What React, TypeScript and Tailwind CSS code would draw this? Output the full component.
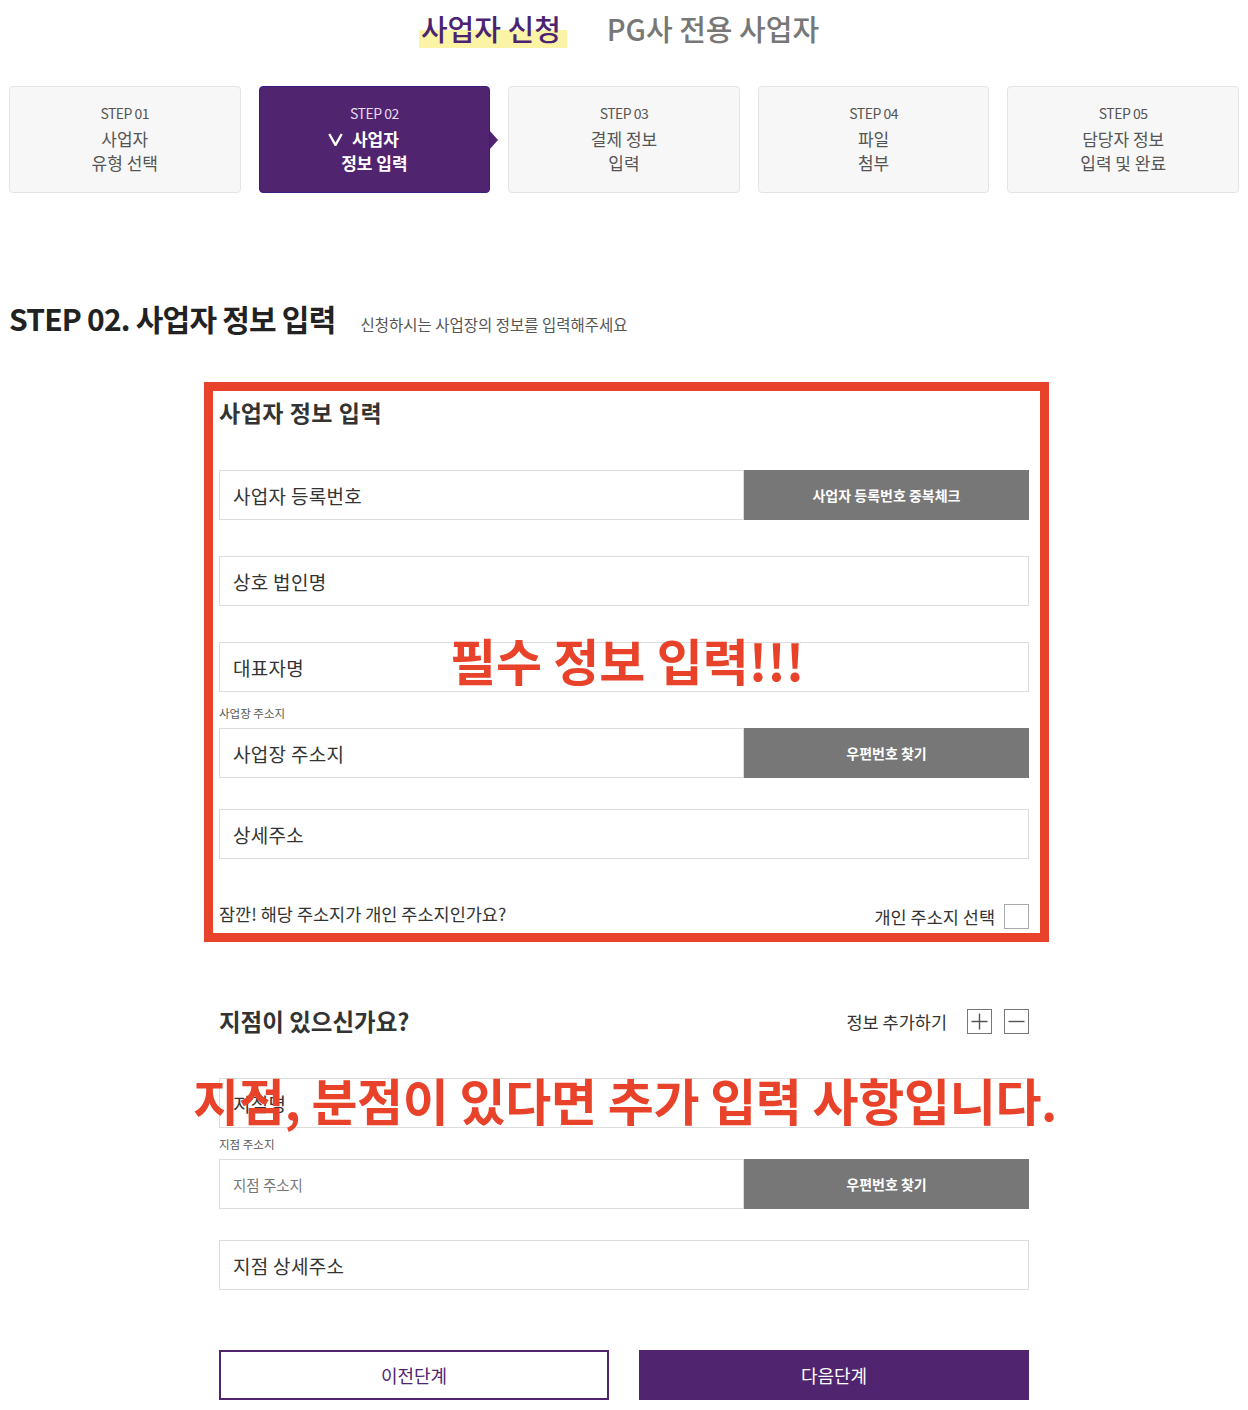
import React from "react"

const steps = [
  { no: "STEP 01", lines: ["사업자", "유형 선택"] },
  { no: "STEP 02", lines: ["사업자", "정보 입력"], active: true },
  { no: "STEP 03", lines: ["결제 정보", "입력"] },
  { no: "STEP 04", lines: ["파일", "첨부"] },
  { no: "STEP 05", lines: ["담당자 정보", "입력 및 완료"] },
]

function StepBox({ no, lines, active }: { no: string; lines: string[]; active?: boolean }) {
  if (active) {
    return (
      <div className="relative h-[107px] rounded-[4px] border border-[#3a1d86] bg-[#50246f] pt-[16px] text-center">
        <div className="text-[14px] leading-[20px] tracking-[-0.5px] text-[#e6dcf0]">{no}</div>
        <div className="mt-[4px] flex items-center justify-center gap-[9px] pr-[22px] text-[17px] font-bold leading-[24px] text-white">
          <svg width="15" height="13" viewBox="0 0 15 13">
            <polyline points="1.3,1 7.5,12 13.7,1" fill="none" stroke="white" strokeWidth="2.4" />
          </svg>
          <span>{lines[0]}</span>
        </div>
        <div className="text-[17px] font-bold leading-[24px] text-white">{lines[1]}</div>
        <span className="absolute right-[-9px] top-1/2 h-0 w-0 -translate-y-1/2 border-y-[9px] border-l-[8px] border-y-transparent border-l-[#50246f]" />
      </div>
    )
  }
  return (
    <div className="h-[107px] rounded-[4px] border border-[#e1e4e9] bg-[#f7f7f7] pt-[16px] text-center">
      <div className="text-[14px] leading-[20px] tracking-[-0.5px] text-[#555]">{no}</div>
      <div className="mt-[4px] text-[17px] leading-[24px] text-[#555]">{lines[0]}</div>
      <div className="text-[17px] leading-[24px] text-[#555]">{lines[1]}</div>
    </div>
  )
}

function Field({ placeholder, button, small }: { placeholder: string; button?: string; small?: boolean }) {
  return (
    <div className="flex h-[50px]">
      <input
        readOnly
        placeholder={placeholder}
        className={
          small
            ? "h-full min-w-0 flex-1 border border-[#dcdcdc] bg-white pl-[13px] text-[14.5px] outline-none placeholder:text-[#777]"
            : "h-full min-w-0 flex-1 border border-[#dcdcdc] bg-white pl-[13px] text-[19px] tracking-[0.3px] outline-none placeholder:text-[#333]"
        }
      />
      {button && (
        <button className="h-full w-[285px] shrink-0 bg-[#777] text-[14px] font-bold text-white">{button}</button>
      )}
    </div>
  )
}

export default function App() {
  return (
    <div className="min-h-[1410px] bg-white pb-[10px] font-['Noto_Sans_CJK_KR','Noto_Sans',sans-serif] text-[#333]">
      <div className="flex justify-center gap-[40px] pr-[10px] pt-[8px]">
        <span className="bg-[linear-gradient(to_bottom,transparent_55%,#fbf3a6_55%)] pl-[2px] pr-[6px] text-[29px] font-medium leading-[40px] text-[#4b2370]">
          사업자 신청
        </span>
        <span className="text-[29px] font-medium leading-[40px] text-[#777]">PG사 전용 사업자</span>
      </div>

      <div className="mt-[38px] grid grid-cols-5 gap-[18px] px-[9px]">
        {steps.map((s) => (
          <StepBox key={s.no} {...s} />
        ))}
      </div>

      <div className="mt-[105px] flex items-baseline gap-[25px] px-[9px]">
        <h1 className="text-[30px] font-bold leading-[40px] tracking-[-0.8px] text-[#222]">STEP 02. 사업자 정보 입력</h1>
        <p className="text-[15.5px] text-[#555]">신청하시는 사업장의 정보를 입력해주세요</p>
      </div>

      <div className="mx-auto w-[810px]">
        <section className="ml-[-15px] mr-[-20px] mt-[44px] border-[9px] border-[#e8432a] pb-[4px] pl-[6px] pr-[11px] pt-[6px]">
          <h2 className="text-[23px] font-bold leading-[30px] tracking-[0.5px] text-[#333]">사업자 정보 입력</h2>
          <div className="mt-[43px]">
            <Field placeholder="사업자 등록번호" button="사업자 등록번호 중복체크" />
          </div>
          <div className="mt-[36px]">
            <Field placeholder="상호 법인명" />
          </div>
          <div className="relative mt-[36px]">
            <Field placeholder="대표자명" />
            <span className="absolute left-[231px] top-[-13px] whitespace-nowrap text-[50px] font-bold leading-[60px] text-[#e8432a]">
              필수 정보 입력!!!
            </span>
          </div>
          <div className="mt-[13px] text-[11.5px] leading-[16px] text-[#555]">사업장 주소지</div>
          <div className="mt-[7px]">
            <Field placeholder="사업장 주소지" button="우편번호 찾기" />
          </div>
          <div className="mt-[31px]">
            <Field placeholder="상세주소" />
          </div>
          <div className="mt-[45px] flex h-[25px] items-center justify-between">
            <span className="mb-[5px] text-[17.5px] leading-[20px] text-[#333]">잠깐! 해당 주소지가 개인 주소지인가요?</span>
            <label className="flex items-center gap-[9px] text-[17.5px] leading-[25px] text-[#333]">
              개인 주소지 선택
              <span className="block h-[25px] w-[25px] border border-[#aaa] bg-white" />
            </label>
          </div>
        </section>

        <div className="mt-[67px] flex h-[25px] items-center justify-between">
          <h3 className="text-[23.5px] font-bold leading-[25px] text-[#333]">지점이 있으신가요?</h3>
          <div className="flex items-center">
            <span className="mr-[20px] text-[17.5px] leading-[25px] text-[#333]">정보 추가하기</span>
            <button className="flex h-[25px] w-[25px] items-center justify-center border border-[#777]">
              <svg width="17" height="17" viewBox="0 0 17 17">
                <path d="M8.5 0.5v16M0.5 8.5h16" stroke="#555" strokeWidth="1.4" />
              </svg>
            </button>
            <button className="ml-[12px] flex h-[25px] w-[25px] items-center justify-center border border-[#777]">
              <svg width="17" height="17" viewBox="0 0 17 17">
                <path d="M0.5 8.5h16" stroke="#555" strokeWidth="1.4" />
              </svg>
            </button>
          </div>
        </div>

        <div className="relative mt-[44px]">
          <Field placeholder="지점명" />
          <span className="absolute left-[-26px] top-[-9px] whitespace-nowrap text-[50px] font-bold leading-[60px] tracking-[-0.3px] text-[#e8432a]">
            지점, 분점이 있다면 추가 입력 사항입니다.
          </span>
        </div>
        <div className="mt-[8px] text-[11.5px] leading-[16px] text-[#555]">지점 주소지</div>
        <div className="mt-[7px]">
          <Field placeholder="지점 주소지" button="우편번호 찾기" small />
        </div>
        <div className="mt-[31px]">
          <Field placeholder="지점 상세주소" />
        </div>

        <div className="mt-[60px] grid grid-cols-2 gap-[30px]">
          <button className="h-[50px] border-2 border-[#50246f] bg-white text-[18px] text-[#50246f]">이전단계</button>
          <button className="h-[50px] bg-[#50246f] text-[18px] text-white">다음단계</button>
        </div>
      </div>
    </div>
  )
}
